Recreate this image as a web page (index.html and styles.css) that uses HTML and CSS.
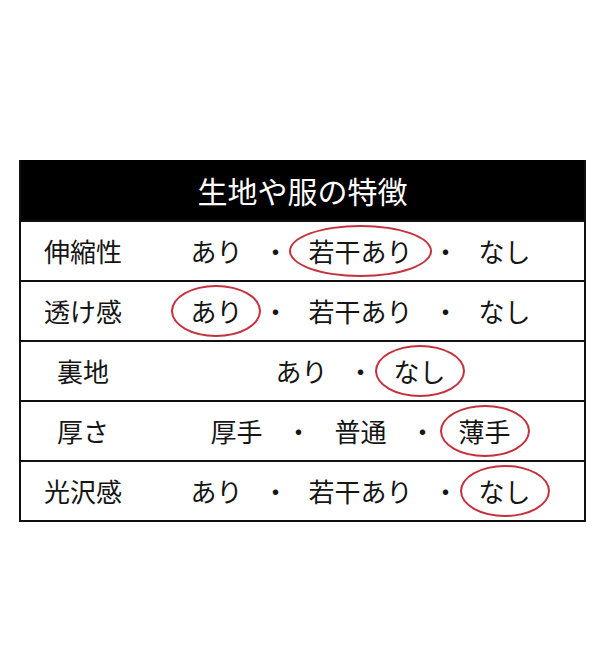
FILE: index.html
```html
<!DOCTYPE html>
<html lang="ja">
<head>
<meta charset="utf-8">
<title>生地や服の特徴</title>
<link rel="stylesheet" href="styles.css">
</head>
<body>
<div class="page">
  <div class="card">
    <div class="head">生地や服の特徴</div>
    <div class="row">
      <div class="label">伸縮性</div>
      <div class="vals"><span>あり</span><span class="sep">・</span><span class="mark">若干あり</span><span class="sep">・</span><span>なし</span></div>
    </div>
    <div class="row">
      <div class="label">透け感</div>
      <div class="vals"><span class="mark">あり</span><span class="sep">・</span><span>若干あり</span><span class="sep">・</span><span>なし</span></div>
    </div>
    <div class="row">
      <div class="label">裏地</div>
      <div class="vals"><span>あり</span><span class="sep">・</span><span class="mark">なし</span></div>
    </div>
    <div class="row wide">
      <div class="label">厚さ</div>
      <div class="vals"><span>厚手</span><span class="sep">・</span><span>普通</span><span class="sep">・</span><span class="mark">薄手</span></div>
    </div>
    <div class="row">
      <div class="label">光沢感</div>
      <div class="vals"><span>あり</span><span class="sep">・</span><span>若干あり</span><span class="sep">・</span><span class="mark">なし</span></div>
    </div>
  </div>
</div>
</body>
</html>
```
FILE: styles.css
```css
html, body {
  margin: 0;
  background: #fff;
}
body {
  font-family: "Noto Sans CJK JP", "Noto Sans", sans-serif;
  color: #151515;
}
.page {
  padding: 160px 0 0 19px;
}
.card {
  width: 567px;
  box-sizing: border-box;
  border: 2px solid #111;
  border-top: 0;
}
.head {
  height: 60px;
  background: #000;
  color: #fff;
  font-size: 30px;
  display: flex;
  align-items: center;
  justify-content: center;
}
.row {
  height: 60px;
  box-sizing: border-box;
  border-top: 2px solid #111;
  display: flex;
  align-items: center;
  font-size: 26px;
}
.label {
  width: 124px;
  text-align: center;
  line-height: 30px;
}
.vals {
  flex: 1;
  display: flex;
  justify-content: center;
  padding-right: 8px;
  line-height: 30px;
}
.sep {
  margin: 0 20px;
}
.row.wide .sep {
  margin: 0 23px;
}
.mark {
  position: relative;
}
.mark::after {
  content: "";
  position: absolute;
  left: -19px;
  right: -19px;
  top: -11px;
  bottom: -11px;
  border: 2px solid #c4303c;
  border-radius: 50%;
}
```
